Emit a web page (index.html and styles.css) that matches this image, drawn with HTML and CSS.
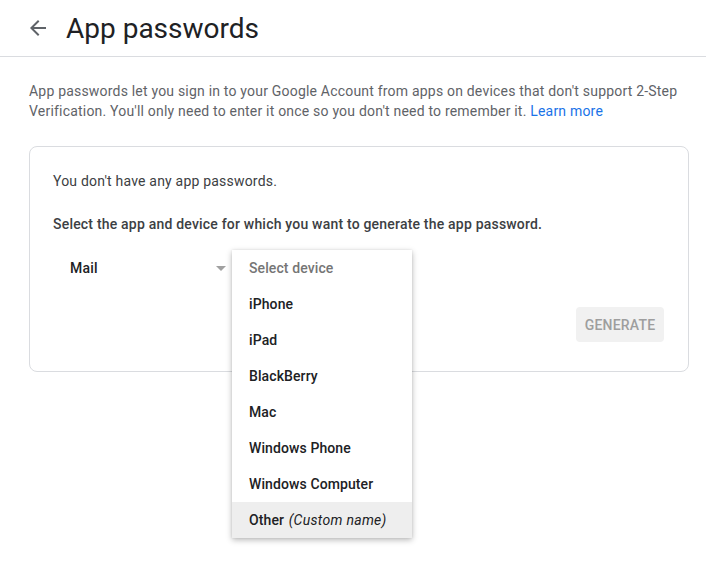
FILE: index.html
```html
<!DOCTYPE html>
<html lang="en">
<head>
<meta charset="utf-8">
<title>App passwords</title>
<link rel="stylesheet" href="styles.css">
</head>
<body>
<header class="topbar">
  <svg class="back" width="24" height="24" viewBox="0 0 24 24" aria-hidden="true"><path d="M20 11H7.83l5.59-5.59L12 4l-8 8 8 8 1.41-1.41L7.83 13H20v-2z" fill="#5f6368"/></svg>
  <h1 class="title">App passwords</h1>
</header>
<main class="content">
  <p class="intro">App passwords let you sign in to your Google Account from apps on devices that don't support 2-Step Verification. You'll only need to enter it once so you don't need to remember it. <a class="link" href="#">Learn more</a></p>
  <section class="card">
    <p class="none">You don't have any app passwords.</p>
    <p class="prompt">Select the app and device for which you want to generate the app password.</p>
    <div class="selects">
      <div class="select app">
        <span class="value">Mail</span>
        <span class="caret"></span>
      </div>
      <div class="select device">
        <ul class="menu">
          <li class="item placeholder">Select device</li>
          <li class="item">iPhone</li>
          <li class="item">iPad</li>
          <li class="item">BlackBerry</li>
          <li class="item">Mac</li>
          <li class="item">Windows Phone</li>
          <li class="item">Windows Computer</li>
          <li class="item hover">Other <em class="custom">(Custom name)</em></li>
        </ul>
      </div>
    </div>
    <div class="actions">
      <button class="generate" disabled>GENERATE</button>
    </div>
  </section>
</main>
</body>
</html>
```
FILE: styles.css
```css
* { box-sizing: border-box; }
html, body { min-height: 562px; }
body {
  margin: 0;
  background: #fff;
  font-family: Roboto, "Liberation Sans", sans-serif;
  color: #3c4043;
  letter-spacing: 0.2px;
}
.topbar {
  height: 57px;
  border-bottom: 1px solid #dadce0;
  display: flex;
  align-items: center;
  padding-left: 26px;
  gap: 16px;
}
.back { display: block; }
.title {
  margin: 0;
  font-family: Roboto, "Open Sans", sans-serif;
  font-weight: 400;
  font-size: 28px;
  color: #202124;
  letter-spacing: 0;
}
.content {
  padding: 24px 17px 0 29px;
}
.intro {
  margin: 0;
  font-size: 14px;
  line-height: 20px;
  color: #5f6368;
}
.link { color: #1a73e8; text-decoration: none; }
.card {
  margin-top: 25px;
  width: 660px;
  border: 1px solid #dadce0;
  border-radius: 8px;
  padding: 24px 24px 29px 23px;
}
.none, .prompt {
  margin: 0;
  font-size: 14px;
  line-height: 20px;
  color: #3c4043;
}
.prompt {
  margin-top: 23px;
  font-weight: 500;
}
.selects {
  display: flex;
  margin-top: 16px;
  height: 36px;
}
.select {
  height: 36px;
  position: relative;
  display: flex;
  align-items: center;
  font-size: 14px;
  font-weight: 500;
  color: #202124;
}
.app {
  width: 179px;
  padding-left: 17px;
}
.caret {
  position: absolute;
  right: 6px;
  top: 16px;
  width: 0;
  height: 0;
  border-left: 5px solid transparent;
  border-right: 5px solid transparent;
  border-top: 5px solid #a0a0a0;
}
.device { width: 180px; }
.menu {
  position: absolute;
  top: 0;
  left: 0;
  width: 180px;
  margin: 0;
  padding: 0;
  list-style: none;
  background: #fff;
  box-shadow: 0 2px 6px rgba(0,0,0,.28), 0 0 2px rgba(0,0,0,.08);
  z-index: 2;
}
.item {
  height: 36px;
  line-height: 36px;
  padding-left: 17px;
  font-size: 14px;
  font-weight: 500;
  color: #202124;
  white-space: nowrap;
  letter-spacing: 0.1px;
}
.placeholder { color: #757575; }
.hover { background: #eeeeee; }
.custom {
  font-style: italic;
  font-weight: 400;
  margin-left: 1px;
  letter-spacing: 0.3px;
}
.actions {
  display: flex;
  justify-content: flex-end;
  margin-top: 21px;
}
.generate {
  width: 88px;
  height: 35px;
  border: 0;
  border-radius: 4px;
  background: #f1f1f1;
  color: #9e9e9e;
  font-family: Roboto, "Liberation Sans", sans-serif;
  font-size: 14px;
  font-weight: 500;
  letter-spacing: 0.2px;
  padding: 0;
}
```
